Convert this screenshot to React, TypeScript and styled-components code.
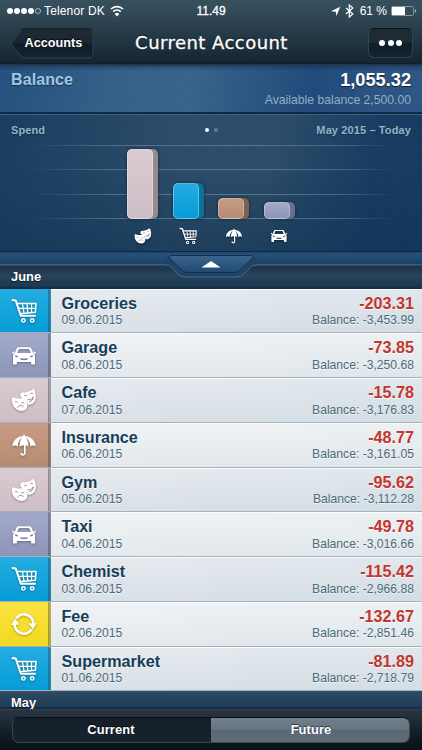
import React from "react";
import styled, { createGlobalStyle } from "styled-components";

const GlobalStyle = createGlobalStyle`
  * { box-sizing: border-box; }
  html, body { margin: 0; padding: 0; background: #0b141e; }
  body { font-family: "Liberation Sans", Arial, Helvetica, sans-serif; overflow: hidden; }
  svg { display: block; }
`;

type IconName = "cart" | "car" | "masks" | "umbrella" | "refresh";

const tones: Record<IconName, { top: string; bottom: string; side: string }> = {
  cart: { top: "#23ade1", bottom: "#079bd5", side: "#08719c" },
  car: { top: "#a3a9c8", bottom: "#8c95b8", side: "#66718f" },
  masks: { top: "#dacbd1", bottom: "#cdbdc6", side: "#978990" },
  umbrella: { top: "#c79c82", bottom: "#b58b72", side: "#7d604f" },
  refresh: { top: "#fae343", bottom: "#f2d81f", side: "#b49f14" },
};

const Screen = styled.main`
  width: 422px;
  height: 750px;
  display: flex;
  flex-direction: column;
  overflow: hidden;
  color: #fff;
`;

const TopChrome = styled.header`
  height: 66px;
  flex: none;
  background: linear-gradient(#38505d 0, #344b59 10px, #1d303d 48px, #152530 63px, #0b1925 64px, #36536a 65px, #112a42 66px);
`;

const StatusBar = styled.div`
  height: 22px;
  display: grid;
  grid-template-columns: 1fr auto 1fr;
  align-items: center;
  padding: 0 5px 0 7px;
  font-size: 12px;
  line-height: 22px;
`;

const StatusGroup = styled.div<{ $end?: boolean }>`
  display: flex;
  align-items: center;
  justify-content: ${(p) => (p.$end ? "flex-end" : "flex-start")};
`;

const Carrier = styled.span`
  letter-spacing: 0.15px;
`;

const Signal = styled.div`
  display: flex;
  gap: 1px;
  margin-right: 3px;
`;

const SignalDot = styled.i<{ $on: boolean }>`
  width: 6px;
  height: 6px;
  border-radius: 50%;
  border: ${(p) => (p.$on ? "0" : "0.8px solid #a9b5bb")};
  background: ${(p) => (p.$on ? "#fff" : "transparent")};
`;

const Clock = styled.span`
  padding-right: 2px;
  -webkit-text-stroke: 0.3px #fff;
`;

const NavBar = styled.div`
  height: 42px;
  display: grid;
  grid-template-columns: 84px 1fr 84px;
  align-items: center;
  padding: 0 10px;
`;

const BackButton = styled.button`
  display: grid;
  place-items: center;
  width: 84px;
  height: 31px;
  padding: 0;
  border: 0;
  background: none;
  color: #fff;
  font: 700 12.7px/31px "Liberation Sans", Arial, sans-serif;
  text-shadow: 0 -1px 1px #000;
  > * { grid-area: 1 / 1; }
  span { padding-left: 3px; }
`;

const NavTitle = styled.h1`
  margin: 0;
  padding-left: 1px;
  text-align: center;
  white-space: nowrap;
  font: 400 18px/30px "DejaVu Sans", sans-serif;
  letter-spacing: 0.45px;
  -webkit-text-stroke: 0.3px #fff;
  text-shadow: 0 -1px 1px rgba(0, 0, 0, 0.7);
`;

const MoreButton = styled.button`
  justify-self: end;
  display: flex;
  align-items: center;
  justify-content: center;
  gap: 2.5px;
  width: 45px;
  height: 30px;
  margin-right: -1px;
  padding: 0;
  border: 1px solid #304350;
  border-top-color: #0b141b;
  border-radius: 6px;
  background: linear-gradient(#1e2b35 0 48%, #111e29 50%, #14232f);
`;

const MoreDot = styled.i`
  width: 6px;
  height: 6px;
  border-radius: 50%;
  background: #fff;
`;

const BalancePanel = styled.section`
  height: 48px;
  flex: none;
  display: flex;
  justify-content: space-between;
  padding: 4px 11px 0;
  border-bottom: 2px solid #102a43;
  background:
    linear-gradient(rgba(10, 30, 60, 0.35), transparent 5px),
    repeating-linear-gradient(45deg, rgba(255, 255, 255, 0.018) 0 1px, transparent 1px 3px),
    linear-gradient(97deg, #24507f, #365f88 28%, #38628a 45%, #20497a 74%, #2c5480 90%, #2c5584);
`;

const BalanceLabel = styled.h2`
  margin: 0;
  font: 700 16px/20px "Liberation Sans", Arial, sans-serif;
  letter-spacing: 0.1px;
  color: #a1c8e2;
  text-shadow: 0 1px 1px #17324b;
`;

const BalanceValues = styled.div`
  text-align: right;
`;

const BalanceAmount = styled.div`
  font: 700 18.2px/20px "Liberation Sans", Arial, sans-serif;
  text-shadow: 0 1px 1px #102338;
`;

const Available = styled.div`
  margin-top: 2px;
  font-size: 12.2px;
  line-height: 16px;
  color: #8fb0c6;
`;

const SpendPanel = styled.section`
  height: 138px;
  flex: none;
  border-top: 1px solid #3b6289;
  border-bottom: 1px solid #0d2843;
  background:
    repeating-linear-gradient(45deg, rgba(255, 255, 255, 0.015) 0 1px, transparent 1px 3px),
    linear-gradient(transparent 35%, rgba(15, 49, 82, 0.55)),
    linear-gradient(100deg, #1a3c5f 0, #2b4d69 42%, #2c4d69 62%, #173b61 86%, #173a60);
`;

const SpendHead = styled.div`
  display: grid;
  grid-template-columns: 1fr auto 1fr;
  align-items: center;
  height: 30px;
  padding: 0 11px;
  font-weight: 700;
  font-size: 11px;
  letter-spacing: 0.12px;
  color: #91b3cc;
  text-shadow: 0 1px 1px #173149;
  > :last-child { text-align: right; }
`;

const Pager = styled.div`
  display: flex;
  gap: 5px;
`;

const PageDot = styled.i<{ $on?: boolean }>`
  width: 4px;
  height: 4px;
  border-radius: 50%;
  background: ${(p) => (p.$on ? "#fff" : "#607d95")};
`;

const Chart = styled.div`
  display: grid;
  height: 74px;
`;

const GridLines = styled.div`
  grid-area: 1 / 1;
  display: flex;
  flex-direction: column;
  justify-content: space-between;
  padding: 0 28px;
`;

const GridLine = styled.i`
  height: 1px;
  background: linear-gradient(90deg, transparent, #536f85 24%, #5b768a 60%, #4a6981 85%, transparent);
`;

const BarRow = styled.div`
  grid-area: 1 / 1;
  display: grid;
  grid-template-columns: repeat(4, 31px);
  column-gap: 14.6px;
  padding-left: 127px;
  align-items: end;
`;

const Bar = styled.div<{ $tone: IconName; $h: number }>`
  height: ${(p) => p.$h}px;
  padding-right: 5px;
  border-radius: 5px;
  background: ${(p) => tones[p.$tone].side};
  box-shadow: 0 0 3px rgba(5, 20, 35, 0.7);
`;

const BarFace = styled.div<{ $tone: IconName }>`
  height: 100%;
  border: 1px solid rgba(255, 255, 255, 0.32);
  border-radius: 5px;
  background: linear-gradient(${(p) => tones[p.$tone].top}, ${(p) => tones[p.$tone].bottom});
`;

const BarIcons = styled.div`
  display: grid;
  grid-template-columns: repeat(4, 31px);
  column-gap: 14.6px;
  padding: 8px 0 0 127px;
  justify-items: center;
  > * { height: 18px; filter: drop-shadow(0 1px 1px rgba(0, 0, 0, 0.5)); }
`;

const MonthArea = styled.div`
  height: 36.5px;
  flex: none;
  display: grid;
  background: linear-gradient(#1c4266 0, #26507a 2px, #1f4468 11px, #1b3c5b 12px, #3a6081 12px 13px, #1c3448 14px, #294359 24px, #1b3953 34px, #0e2b43);
`;

const Tab = styled.div`
  grid-area: 1 / 1;
  justify-self: center;
`;

const MonthLabel = styled.h3<{ $top: number }>`
  grid-area: 1 / 1;
  margin: 0;
  padding: ${(p) => p.$top}px 0 0 11px;
  font: 700 12.9px/16px "Liberation Sans", Arial, sans-serif;
  text-shadow: 0 1px 1px #071626;
`;

const List = styled.ul`
  flex: none;
  display: grid;
  grid-template-rows: repeat(9, 44.75px);
  margin: 0;
  padding: 0;
  list-style: none;
`;

const Row = styled.li<{ $alt: boolean }>`
  display: grid;
  grid-template-columns: 51px 1fr;
  border-bottom: 1px solid #a4b0ba;
  background: ${(p) =>
    p.$alt ? "linear-gradient(90deg, #eff2f4, #e9eef1)" : "linear-gradient(90deg, #e4e8ed, #dbe3e9)"};
`;

const IconCell = styled.div<{ $tone: IconName }>`
  display: grid;
  place-items: center;
  padding-right: 3px;
  border-top: 1px solid rgba(255, 255, 255, 0.15);
  background:
    linear-gradient(90deg, transparent 47.5px, rgba(50, 55, 65, 0.42) 48px, rgba(70, 80, 90, 0.3) 51px),
    linear-gradient(${(p) => tones[p.$tone].top}, ${(p) => tones[p.$tone].bottom});
  svg { filter: drop-shadow(0 1px 1px rgba(0, 0, 0, 0.3)); }
`;

const RowBody = styled.div`
  display: flex;
  justify-content: space-between;
  padding: 4px 8px 0 10.5px;
  border-top: 1px solid #fafcfd;
  background: linear-gradient(rgba(255, 255, 255, 0.15), rgba(170, 190, 200, 0.16));
`;

const Column = styled.div<{ $end?: boolean }>`
  text-align: ${(p) => (p.$end ? "right" : "left")};
`;

const RowTitle = styled.div<{ $negative?: boolean }>`
  font-weight: 700;
  font-size: 16.15px;
  line-height: 18.5px;
  color: ${(p) => (p.$negative ? "#c4352c" : "#153d58")};
  text-shadow: 0 1px 0 rgba(255, 255, 255, 0.8);
`;

const RowSub = styled.div`
  font-size: 12.15px;
  line-height: 16px;
  color: #4c6b7a;
  text-shadow: 0 1px 0 rgba(255, 255, 255, 0.6);
`;

const NextMonth = styled.div`
  height: 17.75px;
  flex: none;
  overflow: hidden;
  background: linear-gradient(#32516a, #2b4963 2px, #203e59 15px, #112638);
`;

const BottomBar = styled.footer`
  flex: 1;
  padding: 7px 12px 8px;
  border-top: 1px solid #33424e;
  background: linear-gradient(#293641, #121c25 60%, #080f16);
`;

const Segments = styled.div`
  display: grid;
  grid-template-columns: 1fr 1fr;
  height: 26px;
  overflow: hidden;
  border: 1px solid #3a4751;
  border-top-color: #080f15;
  border-radius: 7px;
`;

const Segment = styled.button<{ $light?: boolean }>`
  padding: 0 ${(p) => (p.$light ? 0 : 2)}px 0 ${(p) => (p.$light ? 2 : 0)}px;
  border: 0;
  color: #fff;
  font: 700 12.9px/24px "Liberation Sans", Arial, sans-serif;
  letter-spacing: 0.1px;
  text-shadow: 0 -1px 1px rgba(0, 0, 0, 0.6);
  background: ${(p) => (p.$light ? "linear-gradient(#727f8b, #667481 48%, #5a6876 52%, #5f6d7b)" : "linear-gradient(#141f29, #17232e)")};
`;

function Glyph({ name, size = 26 }: { name: IconName; size?: number }) {
  const frame = { width: size, height: size, viewBox: "0 0 26 26", fill: "none" };
  switch (name) {
    case "cart":
      return (
        <svg {...frame} stroke="#fff" strokeLinejoin="round">
          <path d="M.8 2l4 .6 5 15.2h15" strokeWidth="2" />
          <path d="M5.8 5.6h19.2l-.6 8.6-15.5 1.5" strokeWidth="1.5" />
          <path d="M11.4 5.6l1.6 9.5M16 5.6l.7 9M20.6 5.6l-.1 8.5M7.2 10.3h17.6" strokeWidth="1.3" />
          <circle cx="12.4" cy="22.4" r="1.7" strokeWidth="1.5" />
          <circle cx="21.2" cy="22.4" r="1.7" strokeWidth="1.5" />
        </svg>
      );
    case "car":
      return (
        <svg {...frame} fill="#fff">
          <path fillRule="evenodd" d="M8 4.3h10c1.4 0 2 .6 2.6 1.8l1.5 3.5.8.5c-.2-1 .3-1.6 1.4-1.4.8.1.8 1.3 0 1.7l-1.3.3c.8.9 1 1.8 1 3V20.500c0 .7-.4 1-1 1h-1.900c-.7 0-1-.3-1-1v-1.600H5.900v1.600c0 .7-.4 1-1 1H3c-.7 0-1-.3-1-1v-6.800c0-1.200.2-2.100 1-3l-1.300-.3c-.8-.4-.8-1.600 0-1.700 1.100-.2 1.600.4 1.400 1.400l.8-.5 1.500-3.500C6 4.900 6.600 4.300 8 4.300zM7.900 5.900L6.200 10h13.600l-1.700-4.100zM3.700 12.300c.2 1.400 1.300 2.100 3.400 2.100-.2-1.300-1.300-2-3.400-2.100zm18.600 0c-2.100.1-3.200.8-3.400 2.100 2.100 0 3.200-.7 3.400-2.100zM9 15.500l.9 1.400h6.200l.9-1.400z" />
        </svg>
      );
    case "umbrella":
      return (
        <svg {...frame} fill="#fff">
          <path d="M12.3 4V2.400h1.400V4C20 4.300 24.500 8.600 24.600 14.700c-1.400-1.500-3.800-1.600-5.100 0C19 10.300 17.200 7 14.600 5.100c2 2.600 2.900 5.800 2.900 9.600-.8-.9-1.800-1.400-2.800-1.500v7.600c0 4-5.500 3.800-5.500.3h1.700c0 1.500 2.100 1.600 2.100-.3v-7.600c-1.700.1-3.300.5-4.500 1.500 0-3.800.9-7 2.900-9.600C8.800 7 7 10.300 6.500 14.700c-1.300-1.600-3.700-1.500-5.100 0C1.500 8.600 6 4.300 12.300 4z" />
        </svg>
      );
    case "masks":
      return (
        <svg {...frame}>
          <path d="M10.4 5.600C14.300 5.800 18.600 4.600 22 2.200c.5-.3.900-.2 1.200.4 1.500 3.400 2.200 7.900.9 11-1.300 3-4.300 4.500-7.300 4.200-.7-3.300-2.900-6.300-7-7.500-.7-1.800-.7-3.400.6-4.700z" fill="#fff" />
          <path d="M2 10.300c4.200 1.500 7.400 1.400 10.700.8 2.300 1.800 3.600 4.400 3.600 7.400 0 3.300-2.300 5.300-5.400 5.400-3.600.1-7.200-2.100-8.900-5.600-1.200-2.500-1.400-5.400-.8-7.500.1-.5.400-.7.800-.5z" fill="#fff" />
          <path d="M13.400 8.700c.9-.7 1.800-.6 2.400.1M19.300 6.900c.6-.8 1.500-1 2.200-.5M17.100 12.600c2.400.4 4.300-.6 5.200-2.800 0 2.500-1.400 4.600-3.700 4.700M4.300 14.700c.9-.4 1.900-.2 2.400.6M10.300 16c.7-.7 1.800-.8 2.600-.1M6.600 20.200c1-2 3.700-2.500 5.700-.6" stroke="#8f858c" strokeWidth=".95" strokeLinecap="round" />
        </svg>
      );
    default:
      return (
        <svg {...frame}>
          <path d="M5.400 7.400A9.300 9.300 0 0 1 22.300 13.500M20.600 18.600A9.300 9.300 0 0 1 3.700 12.500" stroke="#fff" strokeWidth="2.600" />
          <path d="M.2 14l3.900-6.200L8.600 13.600zM17.400 12.400L25.800 12l-3.900 6.200z" fill="#fff" />
        </svg>
      );
  }
}

const bars: { icon: IconName; height: number }[] = [
  { icon: "masks", height: 70 },
  { icon: "cart", height: 36 },
  { icon: "umbrella", height: 21 },
  { icon: "car", height: 17 },
];

const entries: { icon: IconName; title: string; date: string; amount: string; balance: string }[] = [
  { icon: "cart", title: "Groceries", date: "09.06.2015", amount: "-203.31", balance: "-3,453.99" },
  { icon: "car", title: "Garage", date: "08.06.2015", amount: "-73.85", balance: "-3,250.68" },
  { icon: "masks", title: "Cafe", date: "07.06.2015", amount: "-15.78", balance: "-3,176.83" },
  { icon: "umbrella", title: "Insurance", date: "06.06.2015", amount: "-48.77", balance: "-3,161.05" },
  { icon: "masks", title: "Gym", date: "05.06.2015", amount: "-95.62", balance: "-3,112.28" },
  { icon: "car", title: "Taxi", date: "04.06.2015", amount: "-49.78", balance: "-3,016.66" },
  { icon: "cart", title: "Chemist", date: "03.06.2015", amount: "-115.42", balance: "-2,966.88" },
  { icon: "refresh", title: "Fee", date: "02.06.2015", amount: "-132.67", balance: "-2,851.46" },
  { icon: "cart", title: "Supermarket", date: "01.06.2015", amount: "-81.89", balance: "-2,718.79" },
];

export default function App() {
  return (
    <Screen>
      <GlobalStyle />
      <TopChrome>
        <StatusBar>
          <StatusGroup>
            <Signal>
              {[true, true, true, true, false].map((on, i) => <SignalDot key={i} $on={on} />)}
            </Signal>
            <Carrier>Telenor DK</Carrier>
            <svg width="24" height="12" viewBox="0 0 24 12" fill="none" stroke="#fff" strokeWidth="1.7">
              <path d="M6 4a8.800 8.800 0 0 1 12 0M8.200 6.600a5.600 5.600 0 0 1 7.600 0" />
              <path d="M12 11.500L9.700 8.900a3.200 3.200 0 0 1 4.600 0z" fill="#fff" stroke="none" />
            </svg>
          </StatusGroup>
          <Clock>11.49</Clock>
          <StatusGroup $end>
            <svg width="29" height="14" viewBox="0 0 29 14" fill="none">
              <path d="M0 7.200L9.300 2.800 5.400 12 4.800 7.700z" fill="#fff" />
              <path d="M15 4l6.800 6-3.500 3V1l3.500 3L15 10" stroke="#fff" strokeWidth="1.200" />
            </svg>
            <span>61 %</span>
            <svg width="30" height="12" viewBox="0 0 30 12" fill="none">
              <rect x="4.500" y="1.500" width="22" height="9" rx="1" stroke="#87969e" />
              <path d="M5 2h13v8H5z" fill="#fff" />
              <path d="M28 4.300c1.600.3 1.600 3.100 0 3.400z" fill="#b7c1c7" />
            </svg>
          </StatusGroup>
        </StatusBar>
        <NavBar>
          <BackButton>
            <svg width="84" height="31" viewBox="0 0 84 31">
              <defs>
                <linearGradient id="back" x2="0" y2="1">
                  <stop stopColor="#1f2c36" />
                  <stop offset=".48" stopColor="#1a2731" />
                  <stop offset=".52" stopColor="#111d28" />
                  <stop offset="1" stopColor="#14232e" />
                </linearGradient>
              </defs>
              <path d="M14.500.8H78q5 0 5 5V25q0 5-5 5H14.500q-2 0-3.500-2L1.500 16.500q-1-1.200 0-2.400L11 2.600Q12.500.8 14.500.8z" fill="url(#back)" stroke="#34434f" />
              <path d="M11.500 2.300q1.300-1.500 3-1.500H78q3 0 4.300 2" fill="none" stroke="#0b131a" />
            </svg>
            <span>Accounts</span>
          </BackButton>
          <NavTitle>Current Account</NavTitle>
          <MoreButton aria-label="More"><MoreDot /><MoreDot /><MoreDot /></MoreButton>
        </NavBar>
      </TopChrome>

      <BalancePanel>
        <BalanceLabel>Balance</BalanceLabel>
        <BalanceValues>
          <BalanceAmount>1,055.32</BalanceAmount>
          <Available>Available balance 2,500.00</Available>
        </BalanceValues>
      </BalancePanel>

      <SpendPanel>
        <SpendHead>
          <span>Spend</span>
          <Pager><PageDot $on /><PageDot /></Pager>
          <span>May 2015 – Today</span>
        </SpendHead>
        <Chart>
          <GridLines><GridLine /><GridLine /><GridLine /><GridLine /></GridLines>
          <BarRow>
            {bars.map((b) => <Bar key={b.icon} $tone={b.icon} $h={b.height}><BarFace $tone={b.icon} /></Bar>)}
          </BarRow>
        </Chart>
        <BarIcons>
          {bars.map((b) => <Glyph key={b.icon} name={b.icon} size={18} />)}
        </BarIcons>
      </SpendPanel>

      <MonthArea>
        <MonthLabel $top={17}>June</MonthLabel>
        <Tab>
          <svg width="90" height="27" viewBox="0 0 90 27">
            <defs>
              <linearGradient id="tab" x2="0" y2="1">
                <stop stopColor="#3b658d" />
                <stop offset="1" stopColor="#204a72" />
              </linearGradient>
            </defs>
            <path d="M0 13q4 0 6 3l6 6q3 3 7 3h52q4 0 7-3l6-6q2-3 6-3V5H0z" fill="#204466" />
            <path d="M0 13q4 0 6 3l6 6q3 3 7 3h52q4 0 7-3l6-6q2-3 6-3" fill="none" stroke="#426a8d" />
            <path d="M4 3.500h82q2 1-1 4l-9 9q-3 4-7 4H21q-4 0-7-4l-9-9q-3-3-1-4z" fill="url(#tab)" stroke="#11304f" />
            <path d="M35.500 15.500l9.500-6.500 9.500 6.500z" fill="#fff" />
          </svg>
        </Tab>
      </MonthArea>

      <List>
        {entries.map((e, i) => (
          <Row key={e.date} $alt={i % 2 === 1}>
            <IconCell $tone={e.icon}><Glyph name={e.icon} /></IconCell>
            <RowBody>
              <Column>
                <RowTitle>{e.title}</RowTitle>
                <RowSub>{e.date}</RowSub>
              </Column>
              <Column $end>
                <RowTitle $negative>{e.amount}</RowTitle>
                <RowSub>Balance: {e.balance}</RowSub>
              </Column>
            </RowBody>
          </Row>
        ))}
      </List>

      <NextMonth><MonthLabel $top={4}>May</MonthLabel></NextMonth>

      <BottomBar>
        <Segments>
          <Segment>Current</Segment>
          <Segment $light>Future</Segment>
        </Segments>
      </BottomBar>
    </Screen>
  );
}
